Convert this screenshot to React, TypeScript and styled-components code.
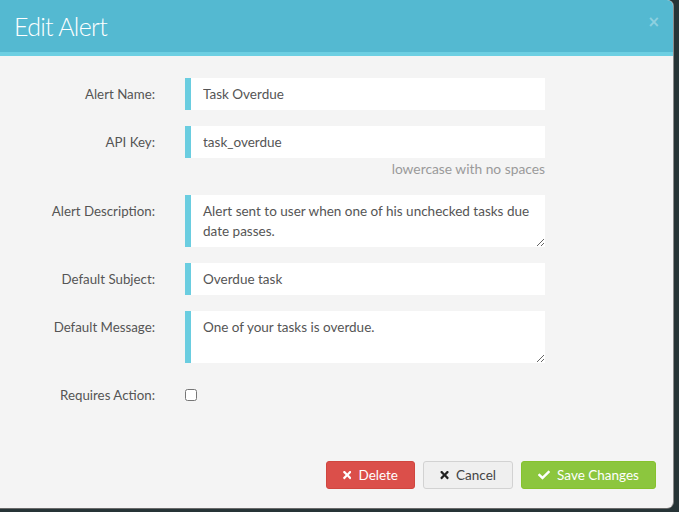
import React, { FC } from "react";
import styled, { createGlobalStyle } from "styled-components";
import { FaTimes, FaCheck } from "react-icons/fa";

const GlobalStyle = createGlobalStyle`
  html, body {
    margin: 0;
    padding: 0;
    width: 679px;
    height: 512px;
    overflow: hidden;
    background: #263436;
    font-family: Lato, "Open Sans", "Liberation Sans", sans-serif;
  }
`;

const Modal = styled.div`
  width: 673px;
  height: 508px;
  display: flex;
  flex-direction: column;
  background: #f4f4f4;
  border-radius: 0 6px 6px 0;
  box-shadow: 1px 0 0 #8a8a8a, 0 1px 0 #6a6a6a;
  overflow: hidden;
`;

const Header = styled.div`
  height: 52px;
  display: flex;
  align-items: center;
  justify-content: space-between;
  padding: 0 13px 0 14px;
  background: #54b9d1;
  border-bottom: 4px solid #6dcfe2;
`;

const Title = styled.h1`
  margin: 0;
  font-size: 25px;
  font-weight: 300;
  letter-spacing: -0.7px;
  color: #ffffff;
`;

const Close = styled.span`
  font-family: "DejaVu Sans", sans-serif;
  font-size: 15px;
  font-weight: bold;
  color: rgba(255, 255, 255, 0.35);
  margin-top: -8px;
`;

const Body = styled.div`
  flex: 1;
  padding-top: 22px;
`;

const Form = styled.div`
  display: grid;
  grid-template-columns: 155px 360px;
  column-gap: 30px;
  row-gap: 16px;
`;

const Label = styled.label`
  text-align: right;
  font-size: 13.3px;
  line-height: 20px;
  padding-top: 6px;
  color: #555555;
`;

const Field = styled.div`
  display: flex;
  flex-direction: column;
`;

const fieldBase = `
  box-sizing: border-box;
  width: 100%;
  border: none;
  border-left: 6px solid #6acde0;
  background: #ffffff;
  padding: 6px 12px;
  font-family: Lato, "Open Sans", "Liberation Sans", sans-serif;
  font-size: 13.5px;
  line-height: 20px;
  color: #555555;
  outline: none;
  margin: 0;
`;

const Input = styled.input`
  ${fieldBase}
  height: 32px;
`;

const TextArea = styled.textarea`
  ${fieldBase}
  height: 52px;
  display: block;
  resize: vertical;
`;

const Hint = styled.div`
  text-align: right;
  font-size: 13.8px;
  line-height: 18px;
  margin: 2px 0 1px;
  color: #9a9a9a;
`;

const CheckCell = styled.div`
  height: 32px;
  display: flex;
  align-items: center;
`;

const Check = styled.input`
  margin: 0;
  width: 12px;
  height: 12px;
`;

const Footer = styled.div`
  display: flex;
  justify-content: flex-end;
  gap: 8px;
  padding: 0 17px 19px 0;
`;

const Button = styled.button<{ $variant: "danger" | "default" | "success" }>`
  height: 28px;
  display: inline-flex;
  align-items: center;
  gap: 7px;
  padding: 0 16px;
  border-radius: 3px;
  font-family: Lato, "Open Sans", "Liberation Sans", sans-serif;
  font-size: 13.5px;
  cursor: pointer;
  border: 1px solid
    ${(p) =>
      p.$variant === "danger"
        ? "#d0463f"
        : p.$variant === "success"
        ? "#86c22d"
        : "#d2d2d2"};
  background: ${(p) =>
    p.$variant === "danger"
      ? "#db4f4a"
      : p.$variant === "success"
      ? "#8cc63e"
      : "#efefef"};
  color: ${(p) => (p.$variant === "default" ? "#444444" : "#ffffff")};

  svg {
    width: 12px;
    height: 12px;
  }
`;

const SizedButton = styled(Button)<{ $width: number }>`
  width: ${(p) => p.$width}px;
  justify-content: center;
  svg {
    color: ${(p) => (p.$variant === "default" ? "#222222" : "#ffffff")};
  }
`;

const App: FC = () => {
  return (
    <>
      <GlobalStyle />
      <Modal>
        <Header>
          <Title>Edit Alert</Title>
          <Close>×</Close>
        </Header>
        <Body>
          <Form>
            <Label>Alert Name:</Label>
            <Field>
              <Input defaultValue="Task Overdue" />
            </Field>

            <Label>API Key:</Label>
            <Field>
              <Input defaultValue="task_overdue" />
              <Hint>lowercase with no spaces</Hint>
            </Field>

            <Label>Alert Description:</Label>
            <Field>
              <TextArea defaultValue="Alert sent to user when one of his unchecked tasks due date passes." />
            </Field>

            <Label>Default Subject:</Label>
            <Field>
              <Input defaultValue="Overdue task" />
            </Field>

            <Label>Default Message:</Label>
            <Field>
              <TextArea defaultValue="One of your tasks is overdue." />
            </Field>

            <Label>Requires Action:</Label>
            <CheckCell>
              <Check type="checkbox" />
            </CheckCell>
          </Form>
        </Body>
        <Footer>
          <SizedButton $variant="danger" $width={89}>
            <FaTimes />
            Delete
          </SizedButton>
          <SizedButton $variant="default" $width={90}>
            <FaTimes />
            Cancel
          </SizedButton>
          <SizedButton $variant="success" $width={135}>
            <FaCheck />
            Save Changes
          </SizedButton>
        </Footer>
      </Modal>
    </>
  );
};

export default App;
